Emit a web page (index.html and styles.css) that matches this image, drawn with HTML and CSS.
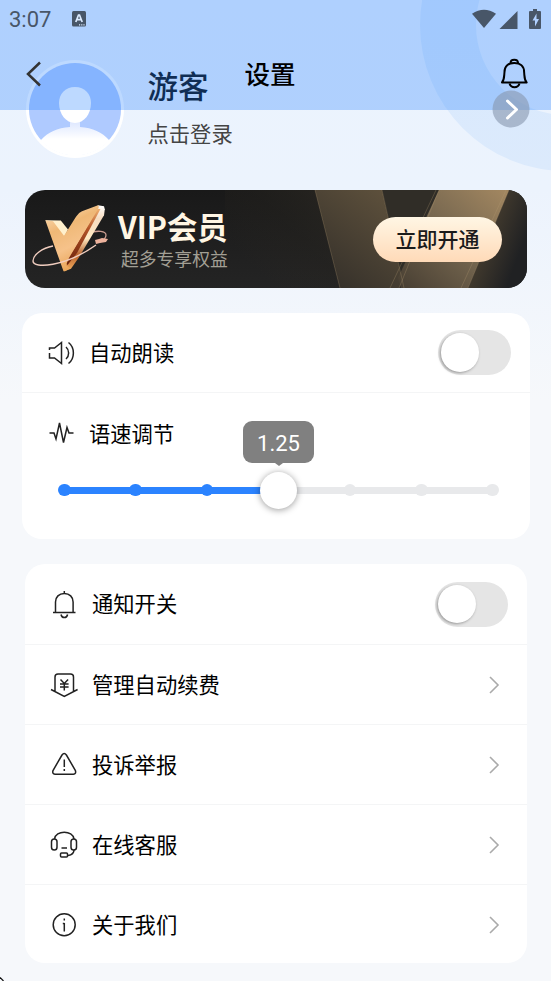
FILE: index.html
```html
<!DOCTYPE html>
<html lang="zh-CN">
<head>
<meta charset="utf-8">
<title>设置</title>
<link rel="stylesheet" href="styles.css">
</head>
<body>
<div class="page">
  <svg class="ring" width="131" height="171" viewBox="420 0 131 171">
    <defs><linearGradient id="rg" x1="0" y1="0" x2="0" y2="1"><stop offset="0" stop-color="#d5e8ff"/><stop offset="1" stop-color="#dceafc"/></linearGradient></defs>
    <path fill="url(#rg)" fill-rule="evenodd" d="M420 25a146 146 0 1 0 292 0a146 146 0 1 0-292 0zM476 25a90 90 0 1 0 180 0a90 90 0 1 0-180 0z"/>
  </svg>

  <header class="header">
    <div class="status">
      <span class="time">3:07</span>
      <svg class="ime" width="14" height="16" viewBox="0 0 14 16"><rect width="14" height="15.5" rx="1.5" fill="#485668"/><path d="M3.800 11L6.500 4h1L10.200 11M4.800 8.700h4.400" fill="none" stroke="#dcebff" stroke-width="1.700"/><path d="M7 13.8h6" stroke="#dcebff" stroke-width="1.2" stroke-dasharray="1.2 1"/></svg>
      <svg class="signals" width="70" height="22" viewBox="472 7 70 22" fill="#485668">
        <path d="M472 12.8Q484 4.5 496 12.8L484 27z"/><path d="M517.5 10v18H499.500z"/>
        <path d="M533 8h4v2h3q1 0 1 1v16q0 1-1 1h-10q-1 0-1-1V11q0-1 1-1h3z"/><path fill="#b0d0ff" d="M536.500 12.500l-4 7h2.500v6l4-7.500h-2.500z"/>
      </svg>
    </div>
    <div class="nav">
      <svg width="18" height="28" viewBox="0 0 18 28"><path d="M16 2.500L4 14l12 11.500" fill="none" stroke="#333" stroke-width="2.500"/></svg>
      <h1 class="title">设置</h1>
      <svg width="28" height="32" viewBox="500 58 28 32" fill="none" stroke="#000" stroke-width="2"><path d="M502 82.500c2.500-3 2-6 2.500-10.500c0-6 4-9 9.800-9s9.800 3 9.800 9c.5 4.500 0 7.500 2.500 10.500z" stroke-linejoin="round"/><path d="M510.500 63c0-4.500 7.500-4.500 7.500 0M509.500 83.500c1.500 5 8.500 5 10 0"/></svg>
    </div>
  </header>

  <section class="profile">
    <svg class="avatar" width="98" height="98" viewBox="0 0 98 98">
      <defs><clipPath id="ac"><circle cx="49" cy="49" r="46.500"/></clipPath><linearGradient id="ag" x1="0" y1="0" x2="0" y2="1"><stop offset="0" stop-color="#d6e2ff"/><stop offset=".5" stop-color="#fff"/></linearGradient></defs>
      <circle cx="49" cy="49" r="49" fill="#fff"/><circle cx="49" cy="49" r="46" fill="#afcaff"/>
      <g clip-path="url(#ac)"><path fill="url(#ag)" d="M44 58h10v9c13 1 22 5 29 13v20H15V80c7-8 16-12 29-13z"/></g>
      <path fill="#fff" d="M49 27c10 0 16 7 16 16c0 11-7 20-16 20s-16-9-16-20c0-9 6-16 16-16z"/>
    </svg>
    <div class="who"><div class="name">游客</div><div class="login">点击登录</div></div>
    <svg class="go" width="38" height="38" viewBox="0 0 38 38"><circle cx="19" cy="19" r="18.500" fill="#8796ae" fill-opacity=".6"/><path d="M15.500 11l9 8.500l-9 8.500" fill="none" stroke="#fff" stroke-width="3" stroke-linecap="round" stroke-linejoin="round"/></svg>
  </section>

  <section class="vip">
    <svg class="vip-art" width="502" height="98" viewBox="0 0 502 98">
      <defs>
        <linearGradient id="b0" x1="0" y1="0" x2="0" y2="1"><stop offset="0" stop-color="#191919"/><stop offset="1" stop-color="#242424"/></linearGradient>
        <linearGradient id="b1" x1="0" y1=".5" x2="1" y2="0"><stop offset="0" stop-color="#302a22" stop-opacity="0"/><stop offset=".3" stop-color="#28251f" stop-opacity=".3"/><stop offset="1" stop-color="#38332b"/></linearGradient>
        <linearGradient id="b2" x1="1" y1="0" x2=".3" y2="1"><stop offset="0" stop-color="#62543e"/><stop offset="1" stop-color="#37322b"/></linearGradient>
        <linearGradient id="b3" x1="1" y1="0" x2="0" y2="1"><stop offset="0" stop-color="#a48861"/><stop offset=".5" stop-color="#75664f"/><stop offset="1" stop-color="#473e32"/></linearGradient>
        <linearGradient id="b4" x1=".3" y1="0" x2="1" y2=".45"><stop offset="0" stop-color="#514532"/><stop offset="1" stop-color="#202123"/></linearGradient>
      </defs>
      <rect width="502" height="98" fill="url(#b0)"/>
      <rect x="200" width="200" height="98" fill="url(#b1)"/>
      <path d="M290 0h67l22 98h-64z" fill="url(#b2)"/>
      <path d="M357 0h57l-40 98h5z" fill="#302d27"/>
      <path d="M484 0h18v98h-59z" fill="url(#b4)"/>
      <path d="M414 0h70l-41 98h-67l-3-10z" fill="url(#b3)"/>
      <path d="M290 0l25 98M357 0l22 98M414 0l-40 98M411 0l-46 98M484 0l-41 98M481 0l-45 98" fill="none" stroke="#b59c74" stroke-opacity=".35" stroke-width=".8"/>
    </svg>
    <svg class="vip-logo" width="80" height="80" viewBox="30 200 80 80">
      <defs>
        <linearGradient id="g1" x1="0" y1="0" x2=".4" y2="1"><stop offset="0" stop-color="#ffe6c6"/><stop offset=".4" stop-color="#efb876"/><stop offset=".7" stop-color="#f6c28a"/><stop offset="1" stop-color="#e9a457"/></linearGradient>
        <linearGradient id="g2" x1="0" y1="0" x2="0" y2="1"><stop offset="0" stop-color="#ffffff"/><stop offset=".2" stop-color="#f6dcc0"/><stop offset=".5" stop-color="#ffe9c2"/><stop offset=".75" stop-color="#b9622c"/><stop offset="1" stop-color="#f3b061"/></linearGradient>
        <linearGradient id="g3" x1="0" y1="0" x2="0" y2="1"><stop offset="0" stop-color="#f0b070"/><stop offset=".35" stop-color="#b25226"/><stop offset="1" stop-color="#6b210c"/></linearGradient>
      </defs>
      <path d="M88 234c10-3 18-2 18 2c0 3-2 5-6 7" fill="none" stroke="#c99c90" stroke-width="1.300"/>
      <path d="M45.300 221.300l15.500.2 7.200 9-4 8z" fill="#fff0cd"/>
      <path d="M98 206.300l6 1 .8 3-.8 6-25 42-8 11.500-6.500 2.500 3-15z" fill="url(#g2)"/>
      <path d="M97 210l3.500 0-23.500 44-9.500 12-1.500-2z" fill="url(#g3)"/>
      <path d="M45.300 221.300l7.700 1 11 14.500 12-19q2-4 6-5.500l16-6q1.500 1 0 4l-29 48.500-3 7.500 4 3-5 3h-1.500z" fill="url(#g1)"/>
      <path d="M53 247c-11 2-20 9-20 15c0 8 32 6 63-16" fill="none" stroke="#f0cdbf" stroke-width="1.400"/>
      <path d="M95 241l4-1 3-1 6 1-2 3-6 1-4 1z" fill="#edb29c"/>
    </svg>
    <div class="vip-text"><div class="vip-title">VIP会员</div><div class="vip-sub">超多专享权益</div></div>
    <button class="open">立即开通</button>
  </section>

  <section class="card voice">
    <div class="row">
      <svg class="icon" width="28" height="28" viewBox="47 339 28 28"><path d="M49.500 350v-2h5l7-5.500v21l-7-5.500h-5v-5M66 347c3.500 3 3.500 9 0 12M68.500 342.500c6.500 5 6.500 16 0 21"/></svg>
      <span class="label">自动朗读</span><span class="switch"></span>
    </div>
    <div class="speed">
      <div class="speed-head">
        <svg class="icon" width="28" height="28" viewBox="47 420 28 28"><path d="M49.500 433h4.500l2 6 3.500-16 4 19.500 3.500-15 2 5.500h4.500"/></svg>
        <span class="label">语速调节</span>
      </div>
      <div class="slider">
        <div class="track"><i class="fill"></i></div>
        <div class="dots"><i class="on"></i><i class="on"></i><i class="on"></i><i class="thumb"></i><i></i><i></i><i></i></div>
        <div class="tip">1.25</div>
      </div>
    </div>
  </section>

  <section class="card menu">
    <div class="row">
      <svg class="icon" width="28" height="30" viewBox="50 589 28 30"><path d="M53 612.500h22.500M55.500 612v-10c0-5 3.500-8.500 8.800-8.500s8.800 3.500 8.800 8.500v10M64.300 591v2.500M61 614.500c.8 4 5.800 4 6.600 0"/></svg>
      <span class="label">通知开关</span><span class="switch"></span>
    </div>
    <div class="row">
      <svg class="icon" width="28" height="28" viewBox="50 670 28 28"><path d="M55 691v-15q0-3 3-3h12.500q3 0 3 3v15M51 688.500l13.300 7 13.300-7M60.500 678.500l3.800 4 3.800-4M64.300 682.500v7M60 683h8.600M60 686h8.600"/></svg>
      <span class="label">管理自动续费</span><svg class="arrow" width="12" height="18" viewBox="0 0 12 18"><path d="M2 1l8 8-8 8"/></svg>
    </div>
    <div class="row">
      <svg class="icon" width="28" height="28" viewBox="50 750 28 28"><path d="M62 754q2.200-3 4.400 0l9 15.500q1 3.500-2 3.800h-18.400q-3-.3-2-3.800zM64.300 758.500v7.500M64.300 768v2"/></svg>
      <span class="label">投诉举报</span><svg class="arrow" width="12" height="18" viewBox="0 0 12 18"><path d="M2 1l8 8-8 8"/></svg>
    </div>
    <div class="row">
      <svg class="icon" width="28" height="28" viewBox="50 830 28 28"><rect x="51.500" y="838" width="5.500" height="11" rx="2.750"/><rect x="71" y="838" width="5.500" height="11" rx="2.750"/><path d="M54.500 838c1-9 18.500-9 19.500 0M74 849c0 3-3 5-6 5.500M61.500 847h5.500"/><rect x="60.500" y="852" width="7" height="4" rx="1"/></svg>
      <span class="label">在线客服</span><svg class="arrow" width="12" height="18" viewBox="0 0 12 18"><path d="M2 1l8 8-8 8"/></svg>
    </div>
    <div class="row">
      <svg class="icon" width="28" height="28" viewBox="50 909.500 28 28"><circle cx="64.200" cy="923.300" r="11"/><path d="M64.300 921.500v8.500M64.300 917v2M62.800 922h1.500"/></svg>
      <span class="label">关于我们</span><svg class="arrow" width="12" height="18" viewBox="0 0 12 18"><path d="M2 1l8 8-8 8"/></svg>
    </div>
  </section>
  <svg class="corner" width="4" height="4" viewBox="0 0 4 4"><path d="M0 .5L3.500 4" stroke="#111" stroke-width="1.200"/></svg>
</div>
</body>
</html>
```
FILE: styles.css
```css
* { box-sizing: border-box; }
body { margin: 0; font-family: Roboto, "Noto Sans CJK SC", sans-serif; color: #111; }
svg { display: block; flex: none; }
.page {
  position: relative;
  width: 551px;
  height: 981px;
  overflow: hidden;
  padding-top: 60px;
  background: linear-gradient(#ebf3fe 0, #ecf3fd 190px, #f6f8fb 400px, #f6f8fb 100%);
}
.ring { position: absolute; top: 0; right: 0; }
.header {
  position: absolute;
  z-index: 2;
  inset: 0 0 auto 0;
  height: 110px;
  background: rgba(38, 128, 255, .3);
}
.status { display: flex; align-items: center; height: 38px; padding: 0 9px 0 9px; }
.time { padding-top: 1px; font-size: 22px; line-height: 38px; color: #485668; }
.ime { margin-left: 21px; }
.signals { margin-left: auto; }
.nav { display: flex; align-items: center; justify-content: space-between; height: 72px; padding: 0 23px 0 24px; }
.title { margin: -4px 0 0 -2px; font-size: 25.500px; font-weight: 500; color: #000; }

.profile { position: relative; display: flex; height: 98px; padding: 0 21px 0 26px; }
.who { margin-left: 23.500px; padding-top: 7px; }
.name { font-size: 30.500px; line-height: 42px; font-weight: 500; color: #0a0a0a; }
.login { margin-top: 11px; font-size: 21.300px; line-height: 30px; color: #444; }
.go { margin: 30px 0 0 auto; z-index: 3; }

.vip {
  position: relative;
  display: flex;
  align-items: center;
  width: 502px;
  height: 98px;
  margin: 32px 0 0 24.500px;
  border-radius: 20px;
  overflow: hidden;
}
.vip-art { position: absolute; inset: 0; }
.vip-logo { position: relative; margin-left: 5.500px; }
.vip-text { position: relative; margin-left: 8px; padding-top: 3px; }
.vip-title { font: 700 30.300px/36px "Noto Sans CJK SC", sans-serif; color: #fff6e4; }
.vip-sub { margin-top: 3px; padding-left: 3px; font-size: 17.800px; line-height: 26px; color: #a29f94; }
.open {
  position: relative;
  width: 129px;
  height: 45px;
  margin: 0 24.500px 0 auto;
  padding: 0 0 2px;
  border: 0;
  border-radius: 23px;
  background: linear-gradient(#fff6e4, #ffdab8);
  font: 500 21px "Noto Sans CJK SC", sans-serif;
  color: #1b1b1b;
}

.card { background: #fff; border-radius: 20px; overflow: hidden; }
.voice { width: 508px; height: 226px; margin: 25px 0 0 21.500px; }
.menu { width: 502px; height: 399px; margin: 25px 0 0 24.500px; }
.row { display: flex; align-items: center; height: 80px; padding: 1px 18.700px 0 25.500px; border-bottom: 1px solid #f4f5f6; }
.menu .row:first-child { height: 81px; padding-top: 0; }
.menu .row:last-child { height: 78px; border-bottom: 0; }
.voice .row { padding-top: 0; }
.icon { fill: none; stroke: #222; stroke-width: 1.500; }
.label { margin-left: 14px; padding-top: 2px; font-size: 21.300px; line-height: 30px; color: #000; }
.arrow { margin: 0 8.300px 0 auto; fill: none; stroke: #aaa; stroke-width: 1.600; }
.switch { width: 73px; height: 45px; margin-left: auto; padding: 3px; border-radius: 23px; background: #e5e5e5; }
.switch::before { content: ""; display: block; width: 38.500px; height: 38.500px; border-radius: 50%; background: #fff; box-shadow: -1px 1px 3px rgba(0, 0, 0, .35); }
.speed { padding: 25px 30.500px 0 25.500px; }
.speed-head { display: flex; align-items: center; height: 32px; }
.slider { position: relative; height: 38px; margin: 21px 0 0 11px; }
.track { position: absolute; inset: 16px 6px auto; height: 6.500px; background: #e8e9eb; }
.fill { display: block; width: 50%; height: 100%; background: #2b83ff; }
.dots { position: relative; display: flex; justify-content: space-between; align-items: center; height: 38px; }
.dots i { width: 12.500px; height: 12.500px; border-radius: 50%; background: #e8e9eb; }
.dots .on { background: #2b83ff; }
.dots .thumb { width: 37px; height: 37px; margin: 0 -12.250px; background: #fff; box-shadow: 0 1px 7px rgba(0, 0, 0, .4); }
.tip {
  position: absolute;
  left: 50%;
  top: -50px;
  width: 71px;
  height: 42px;
  margin-left: -35.500px;
  border-radius: 9px;
  background: #808080;
  font-size: 22px;
  line-height: 45px;
  text-align: center;
  color: #fff;
}
.tip::after { content: ""; position: absolute; left: 31.500px; top: 42px; border: 4px solid transparent; border-top: 3px solid #808080; border-bottom: 0; }
.corner { position: absolute; left: 0; bottom: 0; }
```
